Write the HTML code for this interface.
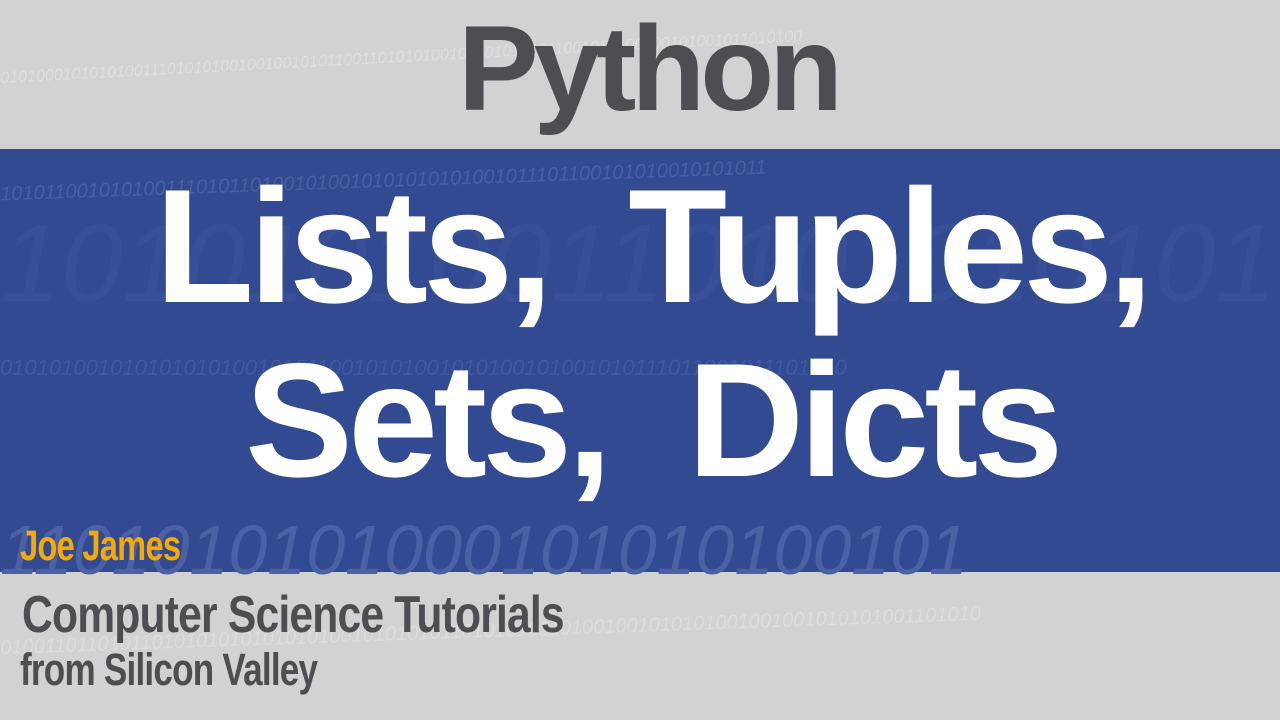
<!DOCTYPE html>
<html><head><meta charset="utf-8"><style>
html,body{margin:0;padding:0}
body{width:1280px;height:720px;background:#d2d2d2;position:relative;overflow:hidden;font-family:"Liberation Sans",Arial,sans-serif}
.band{position:absolute;left:0;top:149px;width:1280px;height:423px;background:#324a91}
.t{position:absolute;white-space:nowrap;font-weight:bold;line-height:1}
.bin{position:absolute;white-space:nowrap;font-family:"Liberation Sans",sans-serif;font-style:italic}
.n{transform-origin:0 0;letter-spacing:-1px}
</style></head><body>
<div class="bin" style="left:0;top:70px;font-size:16px;color:#dedede;transform:rotate(-3deg);transform-origin:0 0">0101000101010100111010101001001001010110011010101001001010101011001010100100101001011010100</div>
<div class="band"></div>
<div class="bin" style="left:0;top:170px;font-size:20px;color:#4760a4;transform:rotate(-2deg)">1010110010101001110101101001010010101010101001011101100101010010101011</div>
<div class="bin" style="left:0;top:200px;font-size:110px;color:#374f96">1010101001101010101010</div>
<div class="bin" style="left:0;top:355px;font-size:22px;color:#4058a0">0101010010101010101001010110010101001010100101001010111011001011101010</div>
<div class="bin" style="left:0;top:510px;font-size:70px;color:#4a62a3">1101010101000101010100101</div>
<div class="bin" style="left:0;top:620px;font-size:20px;color:#dcdcdc;transform:rotate(-2deg)">01001101101011010101010101010100101010101101010101101001001010101001001001010101001101010</div>
<div class="t" style="left:458px;top:8px;font-size:121px;color:#4d4e52;letter-spacing:-5px">Python</div>
<div class="t" style="left:155px;top:166px;font-size:162px;color:#fff;letter-spacing:-5px">Lists,&nbsp; Tuples,</div>
<div class="t" style="left:245px;top:340px;font-size:162px;color:#fff;letter-spacing:-5px">Sets,&nbsp; Dicts</div>
<div class="t n" style="left:20px;top:525px;font-size:43px;color:#f8a900;transform:scaleX(0.76)">Joe James</div>
<div class="t n" style="left:22px;top:589px;font-size:52px;color:#4d4e52;transform:scaleX(0.82)">Computer Science Tutorials</div>
<div class="t n" style="left:20px;top:647px;font-size:45px;color:#4d4e52;transform:scaleX(0.78)">from Silicon Valley</div>
</body></html>
